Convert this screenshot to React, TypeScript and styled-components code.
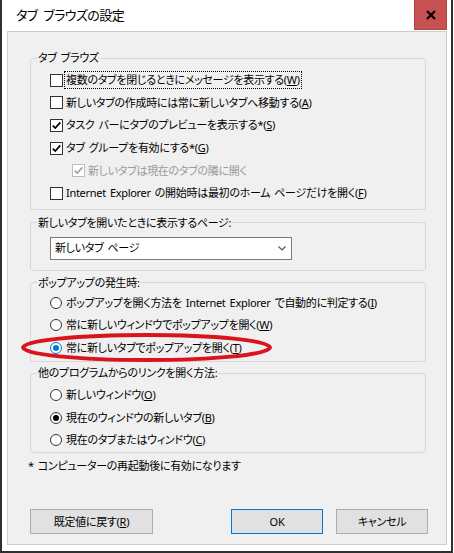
import React from 'react';
import styled, {createGlobalStyle} from 'styled-components';

const GlobalStyle = createGlobalStyle`
  html, body {
    margin: 0;
    padding: 0;
    background: #ffffff;
  }
  body {
    font-family: "Noto Sans", "Noto Sans CJK JP", sans-serif;
    font-size: 11px;
    letter-spacing: -0.3px;
    word-spacing: 1.5px;
    color: #000;
    font-feature-settings: "palt";
  }
`;

const Window = styled.div`
  width: 453px;
  height: 553px;
  box-sizing: border-box;
  border: 2px solid #2f2f2f;
  border-top: none;
  background: #fff;
  display: flex;
  flex-direction: column;
`;

const TitleBar = styled.div`
  height: 31px;
  flex: none;
  display: flex;
  align-items: flex-start;
  justify-content: space-between;
`;

const Title = styled.div`
  padding: 5px 0 0 14px;
  font-size: 13px;
  letter-spacing: -0.6px;
  word-spacing: 3px;
  line-height: 20px;
`;

const CloseButton = styled.div`
  width: 33px;
  height: 30px;
  margin-right: 4px;
  box-sizing: border-box;
  background: #c75050;
  border: 1px solid #b04545;
  border-top: none;
  display: flex;
  align-items: center;
  justify-content: center;
`;

const Client = styled.div`
  flex: 1;
  margin: 0 4px 6px 5px;
  border: 1px solid #c9ced6;
  background: #f0f0f0;
  padding: 18px 20px 10px 22px;
  display: flex;
  flex-direction: column;
`;

const Group = styled.fieldset<{$top: number; $pt: number; $pb: number}>`
  margin: ${p => p.$top}px 0 0;
  padding: ${p => p.$pt}px 0 ${p => p.$pb}px 6px;
  border: 1px solid #d7d7d7;
  border-radius: 3px;
  min-width: 0;
`;

const Legend = styled.legend`
  padding: 0 1px;
  line-height: 16px;
`;

const GroupBody = styled.div`
  padding-left: 13px;
  display: flex;
  flex-direction: column;
`;

const Row = styled.div<{$indent?: number; $disabled?: boolean; $h?: number}>`
  position: relative;
  display: flex;
  align-items: center;
  gap: 3px;
  height: ${p => p.$h ?? 22.6}px;
  padding-left: ${p => p.$indent ?? 0}px;
  color: ${p => (p.$disabled ? '#9a9a9a' : '#000')};
  white-space: nowrap;
  line-height: 16px;
`;

const Box = styled.span<{$disabled?: boolean}>`
  width: 13px;
  height: 13px;
  flex: none;
  box-sizing: border-box;
  border: 1px solid ${p => (p.$disabled ? '#bcbcbc' : '#333')};
  background: #fff;
  display: inline-flex;
  align-items: center;
  justify-content: center;
`;

const RadioCircle = styled.span<{$checked?: boolean; $accent?: boolean}>`
  width: 12px;
  height: 12px;
  flex: none;
  box-sizing: border-box;
  border-radius: 50%;
  border: 1px solid ${p => (p.$accent ? '#0078d7' : '#333')};
  background: #fff;
  display: inline-flex;
  align-items: center;
  justify-content: center;
  margin-right: 1px;

  &::after {
    content: '';
    width: 6px;
    height: 6px;
    border-radius: 50%;
    background: ${p => (p.$accent ? '#0078d7' : '#000')};
    display: ${p => (p.$checked ? 'block' : 'none')};
  }
`;

const FocusText = styled.span`
  outline: 1px dotted #000;
  outline-offset: 0;
  padding: 0 1px;
  margin-left: -1px;
`;

const Select = styled.div`
  width: 242px;
  height: 23px;
  box-sizing: border-box;
  border: 1px solid #7a7a7a;
  background: #fff;
  display: flex;
  align-items: center;
  justify-content: space-between;
  padding: 0 5px 0 4px;
  line-height: 16px;
`;

const Ring = styled.svg`
  position: absolute;
  left: -29px;
  top: -4px;
  overflow: visible;
  pointer-events: none;
`;

const Note = styled.div`
  margin: 5px 0 0 -2px;
  line-height: 16px;
`;

const ButtonRow = styled.div`
  margin-top: auto;
  margin-right: -2px;
  display: flex;
  gap: 13px;
`;

const Button = styled.div<{$w: number; $default?: boolean; $push?: boolean}>`
  width: ${p => p.$w}px;
  height: 25px;
  box-sizing: border-box;
  background: #e1e1e1;
  border: 1px solid ${p => (p.$default ? '#0078d7' : '#adadad')};
  display: flex;
  align-items: center;
  justify-content: center;
  line-height: 16px;
  margin-left: ${p => (p.$push ? 'auto' : '0')};
`;

const Mn = ({k}: {k: string}) => (
  <>
    (<u>{k}</u>)
  </>
);

const Check = ({color = '#000'}: {color?: string}) => (
  <svg width="11" height="11" viewBox="0 0 11 11">
    <path d="M1.8 5.6 L4.3 8.1 L9.3 2.4" fill="none" stroke={color} strokeWidth="1.7" />
  </svg>
);

function CheckRow({
  checked,
  disabled,
  indent,
  children
}: {
  checked?: boolean;
  disabled?: boolean;
  indent?: number;
  children: React.ReactNode;
}) {
  return (
    <Row $indent={indent} $disabled={disabled}>
      <Box $disabled={disabled}>{checked && <Check color={disabled ? '#a0a0a0' : '#000'} />}</Box>
      {children}
    </Row>
  );
}

function RadioRow({
  checked,
  accent,
  children
}: {
  checked?: boolean;
  accent?: boolean;
  children: React.ReactNode;
}) {
  return (
    <Row $h={22.5}>
      <RadioCircle $checked={checked} $accent={accent} />
      {children}
    </Row>
  );
}

export default function App() {
  return (
    <>
      <GlobalStyle />
      <Window>
        <TitleBar>
          <Title>タブ ブラウズの設定</Title>
          <CloseButton>
            <svg width="10" height="10" viewBox="0 0 10 10">
              <path d="M1 1 L9 9 M9 1 L1 9" stroke="#000" strokeWidth="2.2" />
            </svg>
          </CloseButton>
        </TitleBar>

        <Client>
          <Group $top={0} $pt={3} $pb={4}>
            <Legend>タブ ブラウズ</Legend>
            <GroupBody>
              <CheckRow>
                <FocusText>
                  複数のタブを閉じるときにメッセージを表示する<Mn k="W" />
                </FocusText>
              </CheckRow>
              <CheckRow>
                <span>
                  新しいタブの作成時には常に新しいタブへ移動する<Mn k="A" />
                </span>
              </CheckRow>
              <CheckRow checked>
                <span>
                  タスク バーにタブのプレビューを表示する*<Mn k="S" />
                </span>
              </CheckRow>
              <CheckRow checked>
                <span>
                  タブ グループを有効にする*<Mn k="G" />
                </span>
              </CheckRow>
              <CheckRow checked disabled indent={22}>
                <span>新しいタブは現在のタブの隣に開く</span>
              </CheckRow>
              <CheckRow>
                <span>
                  Internet Explorer の開始時は最初のホーム ページだけを開く<Mn k="F" />
                </span>
              </CheckRow>
            </GroupBody>
          </Group>

          <Group $top={5} $pt={6} $pb={10}>
            <Legend>新しいタブを開いたときに表示するページ:</Legend>
            <GroupBody>
              <Select>
                <span>新しいタブ ページ</span>
                <svg width="8" height="5" viewBox="0 0 8 5">
                  <path d="M0.5 0.5 L4 4 L7.5 0.5" fill="none" stroke="#555" strokeWidth="1.2" />
                </svg>
              </Select>
            </GroupBody>
          </Group>

          <Group $top={4} $pt={1} $pb={2}>
            <Legend>ポップアップの発生時:</Legend>
            <GroupBody>
              <RadioRow>
                <span>
                  ポップアップを開く方法を Internet Explorer で自動的に判定する<Mn k="I" />
                </span>
              </RadioRow>
              <RadioRow>
                <span>
                  常に新しいウィンドウでポップアップを開く<Mn k="W" />
                </span>
              </RadioRow>
              <RadioRow checked accent>
                <span>
                  常に新しいタブでポップアップを開く<Mn k="T" />
                </span>
                <Ring width="251" height="29" viewBox="0 0 251 29">
                  <ellipse cx="125.5" cy="14.5" rx="123.5" ry="12.5" fill="none" stroke="#d9141c" strokeWidth="3.8" />
                </Ring>
              </RadioRow>
            </GroupBody>
          </Group>

          <Group $top={3} $pt={3} $pb={0}>
            <Legend>他のプログラムからのリンクを開く方法:</Legend>
            <GroupBody>
              <RadioRow>
                <span>
                  新しいウィンドウ<Mn k="O" />
                </span>
              </RadioRow>
              <RadioRow checked>
                <span>
                  現在のウィンドウの新しいタブ<Mn k="B" />
                </span>
              </RadioRow>
              <RadioRow>
                <span>
                  現在のタブまたはウィンドウ<Mn k="C" />
                </span>
              </RadioRow>
            </GroupBody>
          </Group>

          <Note>* コンピューターの再起動後に有効になります</Note>

          <ButtonRow>
            <Button $w={123}>
              <span>
                既定値に戻す<Mn k="R" />
              </span>
            </Button>
            <Button $w={92} $default $push>
              OK
            </Button>
            <Button $w={92}>キャンセル</Button>
          </ButtonRow>
        </Client>
      </Window>
    </>
  );
}
